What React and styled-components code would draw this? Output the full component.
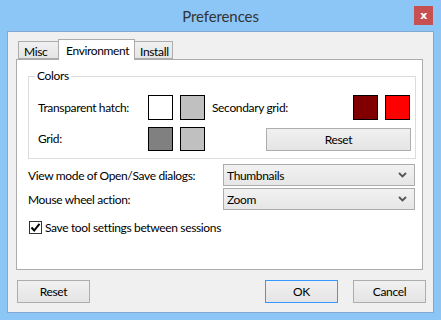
import React from 'react'
import styled, { createGlobalStyle } from 'styled-components'

const GlobalStyle = createGlobalStyle`
  html, body {
    margin: 0;
    padding: 0;
    background: #8ac4f6;
  }
  * {
    box-sizing: border-box;
  }
`

const Window = styled.div`
  width: 441px;
  height: 320px;
  background: #8cc6f7;
  display: flex;
  flex-direction: column;
  padding: 0 7px 7px 7px;
  font-family: Lato, 'Noto Sans', sans-serif;
  font-size: 12px;
  letter-spacing: -0.35px;
  color: #000;
`

const TitleBar = styled.div`
  height: 31px;
  display: grid;
  grid-template-columns: 1fr auto 1fr;
  align-items: center;
`

const Title = styled.div`
  grid-column: 2;
  font-size: 15px;
  letter-spacing: -0.1px;
  color: #333;
  padding-top: 1px;
`

const CloseButton = styled.div`
  grid-column: 3;
  justify-self: end;
  align-self: start;
  margin-top: 6px;
  margin-right: 1px;
  width: 19px;
  height: 19px;
  background: #c75050;
  color: #fff;
  font-weight: bold;
  font-size: 11px;
  display: flex;
  align-items: center;
  justify-content: center;
  font-family: 'DejaVu Sans', sans-serif;
`

const Client = styled.div`
  flex: 1;
  background: #f0f0f0;
  border: 1px solid #7fa9d1;
  display: flex;
  flex-direction: column;
`

const TabArea = styled.div`
  margin: 7px 10px 0 8px;
  display: flex;
  flex-direction: column;
`

const TabStrip = styled.div`
  display: flex;
  align-items: flex-end;
  height: 20px;
  padding-left: 2px;
  position: relative;
  z-index: 1;
`

const Tab = styled.div`
  height: ${(p) => (p.active ? '21px' : '18px')};
  margin-bottom: ${(p) => (p.active ? '-1px' : '0')};
  margin-left: ${(p) => (p.active ? '-1px' : '0')};
  margin-right: ${(p) => (p.active ? '-1px' : '0')};
  padding: ${(p) => (p.active ? '0 6px 0 7px' : '2px 5px 0 5px')};
  width: ${(p) => p.w}px;
  border: 1px solid #acacac;
  border-bottom: ${(p) => (p.active ? 'none' : '1px solid #acacac')};
  background: ${(p) =>
    p.active ? '#fff' : 'linear-gradient(#f0f0f0, #e5e5e5)'};
  position: relative;
  z-index: ${(p) => (p.active ? 2 : 0)};
  display: flex;
  align-items: center;
  white-space: nowrap;
`

const Panel = styled.div`
  height: 211px;
  background: #fff;
  border: 1px solid #acacac;
  padding: 8px 6px 0 11px;
  position: relative;
`

const Group = styled.fieldset`
  margin: 0;
  width: 388px;
  border: 1px solid #dcdcdc;
  padding: 11px 5px 7px 9px;
`

const Legend = styled.legend`
  padding: 0 2px;
  margin-left: -3px;
  line-height: 16px;
`

const ColorGrid = styled.div`
  display: grid;
  grid-template-columns: 103px 25px 25px 1fr 25px 25px;
  grid-template-rows: 25px 24px;
  column-gap: 7px;
  row-gap: 7px;
  align-items: center;
`

const Swatch = styled.div`
  width: 25px;
  height: ${(p) => (p.short ? '24px' : '25px')};
  border: 1px solid #000;
  background: ${(p) => p.color};
`

const Label = styled.span`
  white-space: nowrap;
  padding-bottom: 1px;
`

const SmallButton = styled.div`
  grid-column: 4 / 7;
  justify-self: end;
  width: 145px;
  height: 23px;
  margin-right: -1px;
  border: 1px solid #adadad;
  background: linear-gradient(#f0f0f0, #e5e5e5);
  display: flex;
  align-items: center;
  justify-content: center;
`

const FieldRow = styled.div`
  display: flex;
  align-items: center;
  margin-top: ${(p) => p.mt}px;
`

const FieldLabel = styled.span`
  width: 195px;
  white-space: nowrap;
`

const Select = styled.div`
  width: 192px;
  height: 22px;
  border: 1px solid #acacac;
  background: linear-gradient(#f2f2f2, #e6e6e6);
  display: flex;
  align-items: center;
  justify-content: space-between;
  padding: 0 7px 0 3px;
`

const CheckRow = styled.label`
  display: flex;
  align-items: center;
  gap: 3px;
  margin-top: 10px;
  margin-left: 1px;
`

const CheckBox = styled.span`
  width: 13px;
  height: 13px;
  border: 1px solid #333;
  background: #fff;
  display: flex;
  align-items: center;
  justify-content: center;
`

const Watermark = styled.div`
  position: absolute;
  left: 30px;
  top: 97px;
  font-family: 'DejaVu Sans', sans-serif;
  font-size: 30px;
  font-weight: bold;
  letter-spacing: 2px;
  color: rgba(0, 0, 0, 0.025);
  pointer-events: none;
`

const ButtonRow = styled.div`
  display: flex;
  align-items: center;
  margin-top: 10px;
  padding: 0 7px 0 9px;
`

const Button = styled.div`
  width: 73px;
  height: 23px;
  border: 1px solid ${(p) => (p.primary ? '#3399ff' : '#adadad')};
  background: linear-gradient(#f0f0f0, #e5e5e5);
  display: flex;
  align-items: center;
  justify-content: center;
  margin-left: ${(p) => p.ml || 0}px;
`

const Spacer = styled.div`
  flex: 1;
`

const Chevron = () => (
  <svg width="9" height="6" viewBox="0 0 9 6">
    <path d="M1 1 L4.5 4.5 L8 1" fill="none" stroke="#555" strokeWidth="1.8" />
  </svg>
)

const Check = () => (
  <svg width="11" height="11" viewBox="0 0 11 11">
    <path d="M1.5 5.5 L4.2 8.5 L9.5 1.8" fill="none" stroke="#000" strokeWidth="2" />
  </svg>
)

export default function App() {
  return (
    <>
      <GlobalStyle />
      <Window>
        <TitleBar>
          <Title>Preferences</Title>
          <CloseButton>x</CloseButton>
        </TitleBar>
        <Client>
          <TabArea>
            <TabStrip>
              <Tab w={41}>Misc</Tab>
              <Tab active w={77}>Environment</Tab>
              <Tab w={39}>Install</Tab>
            </TabStrip>
            <Panel>
              <Group>
                <Legend>Colors</Legend>
                <ColorGrid>
                  <Label>Transparent hatch:</Label>
                  <Swatch color="#ffffff" />
                  <Swatch color="#c0c0c0" />
                  <Label>Secondary grid:</Label>
                  <Swatch color="#800000" />
                  <Swatch color="#ff0000" />
                  <Label>Grid:</Label>
                  <Swatch short color="#808080" />
                  <Swatch short color="#c0c0c0" />
                  <SmallButton>Reset</SmallButton>
                </ColorGrid>
              </Group>
              <FieldRow mt={5}>
                <FieldLabel>View mode of Open/Save dialogs:</FieldLabel>
                <Select>
                  Thumbnails
                  <Chevron />
                </Select>
              </FieldRow>
              <FieldRow mt={2}>
                <FieldLabel>Mouse wheel action:</FieldLabel>
                <Select>
                  Zoom
                  <Chevron />
                </Select>
              </FieldRow>
              <CheckRow>
                <CheckBox>
                  <Check />
                </CheckBox>
                Save tool settings between sessions
              </CheckRow>
              <Watermark>SOFTPEDIA®</Watermark>
            </Panel>
          </TabArea>
          <ButtonRow>
            <Button>Reset</Button>
            <Spacer />
            <Button primary>OK</Button>
            <Button ml={15}>Cancel</Button>
          </ButtonRow>
        </Client>
      </Window>
    </>
  )
}
